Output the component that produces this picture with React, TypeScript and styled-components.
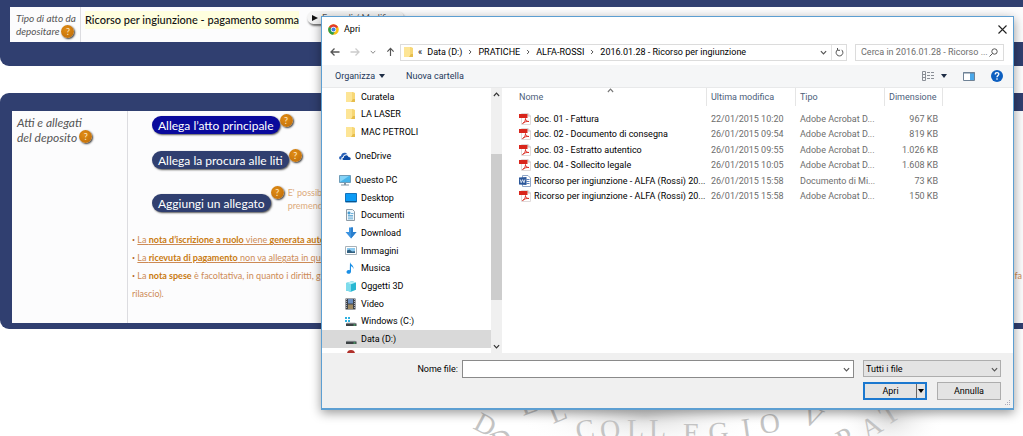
import React from "react";
import styled, { createGlobalStyle, css } from "styled-components";

const navy = "#303f70";
const ui = 'Roboto, "Open Sans", sans-serif';

const Global = createGlobalStyle`
  * { box-sizing: border-box; }
  html, body { margin: 0; background: #fff; overflow: hidden; }
  body { font-family: Lato, "Noto Sans", sans-serif; }
  button, input, select { font: inherit; color: inherit; margin: 0; }
  svg { display: block; flex: none; }
`;

/* ---------- deposit page ---------- */

const Page = styled.div`
  position: relative;
  min-height: 100vh;
  overflow: hidden;
`;

const Panel = styled.section<{ $first?: boolean }>`
  background: ${navy};
  border-radius: ${(p) => (p.$first ? "0 0 0 9px" : "9px 0 0 9px")};
  padding: ${(p) => (p.$first ? "7px 0 24px 10px" : "18px 0 6px 12px")};
  margin-bottom: 27px;
`;

const PanelBody = styled.div<{ $label: number; $height: number }>`
  display: grid;
  grid-template-columns: ${(p) => p.$label}px 1fr;
  min-height: ${(p) => p.$height}px;
  background: #fcfcfd;
`;

const Label = styled.div<{ $large?: boolean }>`
  font-style: italic;
  color: #555;
  border-right: 1px solid #dcdce0;
  white-space: nowrap;
  ${(p) =>
    p.$large
      ? css`
          font-size: 12px;
          line-height: 15px;
          padding: 4px 0 0 5px;
        `
      : css`
          font-size: 10px;
          line-height: 13px;
          padding: 5px 0 0 6px;
        `}
`;

const LabelRow = styled.div`
  display: flex;
  gap: 2px;
`;

const Help = styled.button`
  width: 13px;
  height: 13px;
  flex: none;
  border: 0;
  border-radius: 50%;
  padding: 0;
  background: radial-gradient(circle at 40% 35%, #e28d14, #b9690a);
  box-shadow: 1px 1px 2px #333;
  color: #ffe9c4;
  font-size: 9px;
  line-height: 13px;
  font-style: normal;
  text-align: center;
`;

const ActType = styled.div`
  display: flex;
  align-items: flex-start;
  gap: 8px;
  padding: 4px 0 0 4px;
`;

const ActName = styled.span`
  background: #ffffdf;
  font-size: 11px;
  line-height: 18px;
  font-weight: 500;
  color: #111;
  white-space: nowrap;
`;

const Pill = styled.button`
  display: flex;
  align-items: center;
  gap: 4px;
  height: 13px;
  border: 0;
  border-radius: 7px;
  background: #f4f4f4;
  box-shadow: 1px 2px 2px #777;
  padding: 0 8px 0 5px;
  font-size: 9px;
  color: #555;
`;

const Content = styled.div`
  padding: 5px 0 0 4px;
`;

const Actions = styled.div`
  display: grid;
  row-gap: 17px;
  padding-left: 20px;
`;

const Action = styled.div<{ $low?: boolean }>`
  display: flex;
  align-items: flex-start;
  ${(p) => p.$low && "padding-top: 8px;"}
`;

const ActionButton = styled.button<{ $active?: boolean }>`
  height: 18px;
  border: 0;
  border-radius: 9px;
  padding: 0 6px;
  font-size: 12px;
  line-height: 17px;
  white-space: nowrap;
  color: #fff;
  background: ${(p) => (p.$active ? "#0a0a9c" : navy)};
  box-shadow: 1px 1px 2px #555;
`;

const Tip = styled.div<{ $raised?: boolean }>`
  display: flex;
  margin-top: ${(p) => (p.$raised ? "-8px" : "-2px")};
`;

const Note = styled.p`
  margin: 0 0 0 4px;
  color: #dcab7c;
  font-size: 9px;
  line-height: 13px;
`;

const Notes = styled.ul`
  list-style: none;
  margin: 19px 0 0;
  padding: 0;
  font-size: 9px;
  line-height: 18px;
  color: #cd8a55;
  white-space: nowrap;
  b { color: #c97a10; }
`;

const Bullet = styled.span`
  font: 9px ${ui};
  color: #b5651d;
`;

const Spread = styled.span`
  display: flex;
  justify-content: space-between;
  padding-right: 1px;
`;

const Watermark = styled.svg`
  position: absolute;
  left: 455px;
  top: 396px;
`;

/* ---------- file dialog ---------- */

const Dialog = styled.div`
  position: absolute;
  left: 321px;
  right: 9px;
  top: 16px;
  background: #fff;
  border: 1px solid #5d9fd2;
  border-bottom-width: 2px;
  box-shadow: 0 3px 10px rgba(0, 0, 0, 0.4);
  font-family: ${ui};
  font-size: 9px;
  line-height: 14px;
  color: #000;
`;

const TitleBar = styled.header`
  display: flex;
  align-items: center;
  gap: 5px;
  height: 24px;
  padding: 0 5px 0 6px;
`;

const Title = styled.h1`
  flex: 1;
  margin: 0;
  font: inherit;
`;

const IconButton = styled.button<{ $gap?: number }>`
  display: flex;
  align-items: center;
  justify-content: center;
  gap: ${(p) => p.$gap ?? 0}px;
  border: 0;
  padding: 0;
  background: none;
`;

const NavBar = styled.nav`
  display: flex;
  align-items: center;
  height: 22px;
  margin-bottom: 2px;
  padding: 0 9px 0 8px;
`;

const Arrows = styled.div`
  display: flex;
  align-items: center;
  gap: 10px;
  width: 70px;
`;

const Address = styled.div`
  flex: 1;
  display: flex;
  align-items: center;
  height: 17px;
  border: 1px solid #dcdcdc;
  padding-left: 2px;
  white-space: nowrap;
`;

const Crumbs = styled.div`
  flex: 1;
  display: flex;
  align-items: center;
  gap: 5px;
  padding-left: 4px;
  a { color: inherit; text-decoration: none; }
`;

const Reload = styled(IconButton)`
  width: 15px;
  height: 15px;
  margin-left: 4px;
  border-left: 1px solid #e3e3e3;
`;

const Search = styled.label`
  display: flex;
  align-items: center;
  width: 149px;
  height: 17px;
  margin-left: 8px;
  padding: 0 5px;
  border: 1px solid #dcdcdc;
  input {
    flex: 1;
    min-width: 0;
    border: 0;
    padding: 0;
    outline: 0;
    background: none;
  }
  input::placeholder { color: #6d6d6d; opacity: 1; }
`;

const Toolbar = styled.div`
  display: flex;
  align-items: center;
  height: 23px;
  padding: 0 10px 0 13px;
  background: #f5f6f7;
  border-bottom: 1px solid #e8e9ea;
  color: #1e395b;
`;

const ToolGroup = styled.div<{ $gap: number; $grow?: boolean }>`
  display: flex;
  align-items: center;
  gap: ${(p) => p.$gap}px;
  ${(p) => p.$grow && "flex: 1;"}
`;

const Main = styled.div`
  display: flex;
  height: 265px;
`;

const Sidebar = styled.aside`
  width: 169px;
  overflow: hidden;
`;

const Tree = styled.ul<{ $height: number; $gap?: number }>`
  display: grid;
  grid-auto-rows: 1fr;
  height: ${(p) => p.$height}px;
  margin: 0 0 ${(p) => p.$gap || 0}px;
  padding: 0;
  list-style: none;
`;

const TreeItem = styled.li<{ $top?: boolean; $selected?: boolean }>`
  display: grid;
  grid-template-columns: 12px 1fr;
  align-items: center;
  gap: 4px;
  padding-left: ${(p) => (p.$top ? 17 : 23)}px;
  background: ${(p) => (p.$selected ? "#d9d9d9" : "transparent")};
`;

const ScrollBar = styled.div`
  display: flex;
  flex-direction: column;
  align-items: center;
  width: 11px;
  background: #f0f0f0;
`;

const ScrollArrow = styled(IconButton)`
  width: 11px;
  height: 13px;
`;

const Thumb = styled.div`
  width: 11px;
  height: 146px;
  margin: 53px 0 auto;
  background: #cdcdcd;
`;

const Files = styled.div`
  flex: 1;
  min-width: 0;
  padding-left: 13px;
  overflow: hidden;
`;

const FileTable = styled.table`
  width: 428px;
  table-layout: fixed;
  border-collapse: separate;
  border-spacing: 0;
  th {
    height: 18px;
    padding: 0 0 0 4px;
    border-right: 1px solid #e5e5e5;
    font-weight: 400;
    text-align: left;
    color: #4c607a;
  }
  td {
    height: 15px;
    padding: 0 0 0 4px;
    color: #6d6d6d;
    white-space: nowrap;
  }
  tr:nth-child(even) td { height: 16px; }
  td:last-child { text-align: right; padding-right: 5px; }
`;

const Head = styled.thead`
  &::after {
    content: "";
    display: block;
    height: 5px;
  }
`;

const FileName = styled.span`
  display: flex;
  align-items: center;
  gap: 3px;
  color: #000;
`;

const SortMark = styled.span`
  position: absolute;
  left: 285px;
  top: 70px;
`;

const Footer = styled.footer`
  position: relative;
  display: grid;
  grid-template-columns: 1fr 138px;
  gap: 4px 9px;
  height: 55px;
  padding: 7px 12px 8px 90px;
  background: #f0f0f0;
`;

const NameField = styled.div`
  display: grid;
  grid-template-columns: 46px 1fr;
  align-items: center;
  gap: 4px;
  label { text-align: right; }
`;

const Combo = styled.span`
  display: flex;
  align-items: center;
  height: 18px;
  padding-right: 3px;
  border: 1px solid #8a8a8a;
  background: #fff;
  input {
    flex: 1;
    min-width: 0;
    height: 14px;
    border: 0;
    padding: 0 3px;
    outline: 0;
    background: none;
  }
`;

const TypeField = styled.span`
  position: relative;
  height: 17px;
  select {
    display: block;
    appearance: none;
    width: 100%;
    height: 17px;
    padding: 0 2px;
    border: 1px solid #adadad;
    border-radius: 0;
    background: #e3e3e3;
    line-height: 14px;
  }
  svg {
    position: absolute;
    right: 3px;
    top: 6px;
    pointer-events: none;
  }
`;

const Buttons = styled.div`
  grid-column: 2;
  display: flex;
  justify-content: space-between;
`;

const Split = styled.div`
  display: flex;
  width: 64px;
  height: 18px;
  border: 2px solid #1b78cf;
  background: #e3e3e3;
`;

const OpenButton = styled(IconButton)`
  flex: 1;
`;

const OpenMenu = styled(IconButton)`
  width: 9px;
  border-left: 1px solid #666;
`;

const Cancel = styled.button`
  width: 64px;
  height: 18px;
  padding: 0;
  border: 1px solid #adadad;
  background: #e3e3e3;
  line-height: 14px;
`;

const Grip = styled.svg`
  position: absolute;
  right: 2px;
  bottom: 1px;
`;

/* ---------- icons ---------- */

const Chevron = ({ d = "down", size = 7, color = "#555" }: { d?: "down" | "up" | "right"; size?: number; color?: string }) => (
  <svg width={size} height={size} viewBox="0 0 8 8" fill="none" stroke={color} strokeWidth="1.3">
    <path d={d === "down" ? "M1 2.5 4 5.7 7 2.5" : d === "up" ? "M1 5.7 4 2.5 7 5.7" : "M2.7 1.3 5.4 4 2.7 6.7"} />
  </svg>
);

const Triangle = ({ w = 6, color = "#1e2d45" }: { w?: number; color?: string }) => (
  <svg width={w} height="4" viewBox="0 0 6 4"><path d="M0 0h6L3 4z" fill={color} /></svg>
);

const Arrow = ({ up, color = "#555" }: { up?: boolean; color?: string }) => (
  <svg width={up ? 9 : 10} height="10" viewBox="0 0 10 10" fill="none" stroke={color} strokeWidth="1.3">
    {up ? <path d="M5 9.5V1M1.5 4.5 5 1l3.5 3.5" /> : <path d="M9.5 5H1M4.5 1.5 1 5l3.5 3.5" />}
  </svg>
);

const Folder = () => (
  <svg width="11" height="12" viewBox="0 0 11 12">
    <path d="M1 1h7l2 1v9H1z" fill="#f7d775" />
    <path d="M1 1h6v10H1z" fill="#fde596" />
    <path d="M8 8h2v3H6z" fill="#e6bd4c" />
  </svg>
);

const Chrome = () => (
  <svg width="11" height="11" viewBox="0 0 24 24">
    <circle cx="12" cy="12" r="11.5" fill="#fbc116" />
    <path d="M12 12 2 6.3A11.5 11.5 0 0 1 22 6.3z" fill="#e33b2e" />
    <path d="M12 12 2 6.3A11.5 11.5 0 0 0 11 23.5l5-9z" fill="#2a9d4a" />
    <circle cx="12" cy="12" r="5.8" fill="#fff" />
    <circle cx="12" cy="12" r="4.5" fill="#3f7fe0" />
  </svg>
);

const Pdf = () => (
  <svg width="12" height="12" viewBox="0 0 12 12">
    <path d="M2.5.5H9L11.5 3v8.500h-9z" fill="#fff" stroke="#e0dada" />
    <path d="M9 .5V3h2.500" fill="none" stroke="#b9b3b3" strokeWidth=".8" />
    <path d="M0 1h8.500v4H0z" fill="#d9261c" />
    <path d="M3.500 10.500c2-1 3-3 3-5 0 2 1.500 3 3.500 3-2.500-.3-4.500.4-6.500 2z" fill="none" stroke="#d9261c" strokeWidth=".9" />
  </svg>
);

const Word = () => (
  <svg width="12" height="12" viewBox="0 0 12 12">
    <path d="M3.500.5H9L11.500 3v8.500h-8z" fill="#fff" stroke="#8fa6c8" />
    <path d="M7.500 4.500h3M7.500 6.500h3M7.500 8.500h3" stroke="#5f84bd" />
    <path d="M0 2.500 7.500 2v8L0 9.500z" fill="#2b579a" />
    <path d="m1.300 4.500.9 3.200 1.400-3 1.400 3 .9-3.200" fill="none" stroke="#fff" strokeWidth=".8" />
  </svg>
);

const OneDrive = () => (
  <svg width="12" height="10" viewBox="0 0 12 10">
    <path d="M1 8.500C-.7 7.500.2 5 2 5c.2-3.500 5-4.500 6.500-1.500C6 3 4.500 4 4 6c-1.500 0-2 1.500-1.500 2.500z" fill="#2a62b8" />
    <path d="M4.500 9C3 8.800 3 6.800 4.800 6.700 5 4 8.700 3.500 9.500 6 12 6 12.500 9 10.500 9z" fill="#0c47a1" />
  </svg>
);

const Pc = () => (
  <svg width="12" height="11" viewBox="0 0 12 11">
    <path d="M.5.5h11v7H.5z" fill="#47b4ea" stroke="#6f9cb8" />
    <path d="M1 7V1h9z" fill="#85d3f7" />
    <path d="M5 8h2v1.500h3v1H2v-1h3z" fill="#8195a3" />
  </svg>
);

const Desktop = () => (
  <svg width="12" height="10" viewBox="0 0 12 10">
    <path d="M.5.5h11v8.500H.5z" fill="#0c9bf5" stroke="#1473bb" />
    <path d="M1 8.500h10" stroke="#0a568f" />
  </svg>
);

const Documents = () => (
  <svg width="11" height="12" viewBox="0 0 11 12">
    <path d="M1.500.5h6l2 2v9h-8z" fill="#eef6fb" stroke="#8d9ba6" />
    <path d="M3 3h2v2H3zM3 8h5M3 6.500h5M6 4.500h2.500M3 9.800h5" fill="#3b97d3" stroke="#4f9fd0" strokeWidth=".8" />
  </svg>
);

const Download = () => (
  <svg width="12" height="12" viewBox="0 0 12 12">
    <path d="M4 .5h4V5h3.500L6 11.500.5 5H4z" fill="#3c93e0" />
    <path d="M6 .5h2V5h3.500L6 11.500z" fill="#2b7fcd" />
  </svg>
);

const Pictures = () => (
  <svg width="12" height="9" viewBox="0 0 12 9">
    <path d="M.5.5h11v8H.5z" fill="#fff" stroke="#a8b2b9" />
    <path d="M2 2h8v5H2z" fill="#8ccaf0" />
    <path d="M2 7V4.500l2.500-1L7 5.500l3-.3V7z" fill="#315f7f" />
  </svg>
);

const Music = () => (
  <svg width="11" height="12" viewBox="0 0 11 12">
    <path d="M5 0c.2 2.500 4 3 3.500 7-.4-1.500-1.500-2.500-2.500-2.700V9.500C6 12.500 1.500 12.500 1.500 10c0-1.600 1.800-2.500 3.300-1.700z" fill="#1a8fe6" />
  </svg>
);

const Objects = () => (
  <svg width="12" height="11" viewBox="0 0 12 11">
    <path d="M1 2 7 .3 11 1.500v7.300L6 10.800 1 9.500z" fill="#28b7d2" />
    <path d="m1 2 5 1.200v7.600L1 9.500z" fill="#7edcec" />
    <path d="m1 2 6-1.700 4 1.200-5 1.700z" fill="#b5f0f7" />
  </svg>
);

const Video = () => (
  <svg width="11" height="12" viewBox="0 0 11 12">
    <path d="M.5.5h10v11H.5z" fill="#3e4348" />
    <path d="M3 1h5v4.500H3z" fill="#6c8fc0" />
    <path d="M3 6.500h5V11H3z" fill="#a08b62" />
    <path d="M1.500 1v10M9.500 1v10" stroke="#ccd" strokeDasharray="1 1" strokeWidth=".8" />
  </svg>
);

const Drive = ({ win }: { win?: boolean }) => (
  <svg width="12" height="11" viewBox="0 0 12 11">
    {win && <path d="M0 1h2v2H0zM3 1h2v2H3zM0 4h2v2H0zM3 4h2v2H3z" fill="#2fb1e0" />}
    <path d="M2 6.500h8l1.500 1.500H1z" fill="#b9bfc2" />
    <path d="M1 7.500h10.500V10H1z" fill="#3c4144" />
    <path d="M8.500 8.500h2v1h-2z" fill="#53d17a" />
  </svg>
);

const RedDrive = () => (
  <svg width="12" height="16" viewBox="0 0 12 16"><circle cx="6" cy="5" r="4" fill="#b0302a" /></svg>
);

/* ---------- data ---------- */

const folders = ["Curatela", "LA LASER", "MAC PETROLI"];

const places: [string, React.ReactNode][] = [
  ["Desktop", <Desktop />],
  ["Documenti", <Documents />],
  ["Download", <Download />],
  ["Immagini", <Pictures />],
  ["Musica", <Music />],
  ["Oggetti 3D", <Objects />],
  ["Video", <Video />],
  ["Windows (C:)", <Drive win />],
  ["Data (D:)", <Drive />],
];

const files = [
  ["doc. 01 - Fattura", "22/01/2015 10:20", "Adobe Acrobat D...", "967 KB"],
  ["doc. 02 - Documento di consegna", "26/01/2015 09:54", "Adobe Acrobat D...", "819 KB"],
  ["doc. 03 - Estratto autentico", "26/01/2015 09:55", "Adobe Acrobat D...", "1.026 KB"],
  ["doc. 04 - Sollecito legale", "26/01/2015 10:05", "Adobe Acrobat D...", "1.608 KB"],
  ["Ricorso per ingiunzione - ALFA (Rossi) 20...", "26/01/2015 15:58", "Documento di Mi...", "73 KB"],
  ["Ricorso per ingiunzione - ALFA (Rossi) 20...", "26/01/2015 15:58", "Adobe Acrobat D...", "150 KB"],
];

const crumbs = ["Data (D:)", "PRATICHE", "ALFA-ROSSI", "2016.01.28 - Ricorso per ingiunzione"];

/* engraved letters of the seal: glyph, x, y, angle */
const engraving: [string, number, number, number][] = [
  ["D", 17, 32, 28],
  ["E", 68, 20, -20],
  ["L", 98, 28, -22],
  ["D", 40, 56, -20],
  ["E", 62, 58, 14],
  ["C", 122, 44, -8],
  ["O", 146, 44, -6],
  ["L", 172, 42, 0],
  ["L", 194, 42, 0],
  ["E", 228, 46, 0],
  ["G", 254, 46, -4],
  ["I", 288, 42, -8],
  ["O", 306, 38, -8],
  ["V", 345, 26, 20],
  ["P", 388, 54, -30],
  ["A", 412, 44, -30],
  ["T", 432, 30, -32],
];

const FileDialog = () => (
  <Dialog role="dialog" aria-label="Apri">
    <TitleBar>
      <Chrome />
      <Title>Apri</Title>
      <IconButton aria-label="Chiudi">
        <svg width="11" height="11" viewBox="0 0 11 11" stroke="#222" strokeWidth="1.1"><path d="m1.500 1.500 8 8m0-8-8 8" /></svg>
      </IconButton>
    </TitleBar>
    <NavBar>
      <Arrows>
        <IconButton aria-label="Indietro"><Arrow /></IconButton>
        <IconButton aria-label="Avanti">
          <svg width="10" height="10" viewBox="0 0 10 10" fill="none" stroke="#ccc" strokeWidth="1.3"><path d="M.5 5H9M5.500 1.500 9 5 5.500 8.500" /></svg>
        </IconButton>
        <IconButton aria-label="Recenti"><Chevron size={6} color="#888" /></IconButton>
        <IconButton aria-label="Su"><Arrow up /></IconButton>
      </Arrows>
      <Address>
        <Folder />
        <Crumbs>
          <span>«</span>
          {crumbs.map((c, i) => (
            <React.Fragment key={c}>
              {i > 0 && <Chevron d="right" size={6} />}
              <a href="#">{c}</a>
            </React.Fragment>
          ))}
        </Crumbs>
        <Chevron />
        <Reload aria-label="Aggiorna">
          <svg width="9" height="9" viewBox="0 0 9 9" fill="none" stroke="#555"><path d="M6.500 1.800A3.400 3.400 0 1 1 2.500 1.800M2.500 0v2.300H5" /></svg>
        </Reload>
      </Address>
      <Search>
        <input aria-label="Cerca" placeholder="Cerca in 2016.01.28 - Ricorso ..." />
        <svg width="9" height="9" viewBox="0 0 9 9" fill="none" stroke="#555"><circle cx="5.500" cy="3.500" r="2.700" /><path d="M3.500 5.500.5 8.500" /></svg>
      </Search>
    </NavBar>
    <Toolbar>
      <ToolGroup $gap={21} $grow>
        <IconButton $gap={4}>Organizza <Triangle /></IconButton>
        <IconButton>Nuova cartella</IconButton>
      </ToolGroup>
      <ToolGroup $gap={16}>
        <IconButton $gap={7} aria-label="Visualizzazione">
          <svg width="12" height="10" viewBox="0 0 12 10" fill="none" stroke="#8a8f96"><path d="M.5.5h3v9h-3zM.5 3.500h3M.5 6.500h3M5 1.500h3M9 1.500h3M5 4.500h3M9 4.500h3M5 7.500h3M9 7.500h3" /></svg>
          <Triangle />
        </IconButton>
        <IconButton aria-label="Riquadro di anteprima">
          <svg width="12" height="9" viewBox="0 0 12 9"><path d="M.5.5h11v8H.5z" fill="#fff" stroke="#6f8296" /><path d="M7 1h4v7H7z" fill="#4aa8ea" /><path d="M0 1h12" stroke="#6f8296" /></svg>
        </IconButton>
        <IconButton aria-label="Guida">
          <svg width="12" height="12" viewBox="0 0 12 12"><circle cx="6" cy="6" r="6" fill="#0d5fc0" /><path d="M4.200 4.500C4.200 2 8 2.200 7.800 4.300 7.700 5.500 6 5.600 6 7.300M6 8.300v1.400" fill="none" stroke="#fff" strokeWidth="1.3" /></svg>
        </IconButton>
      </ToolGroup>
    </Toolbar>
    <Main>
      <Sidebar>
        <Tree $height={53} $gap={6}>
          {folders.map((f) => (
            <TreeItem key={f}><Folder />{f}</TreeItem>
          ))}
        </Tree>
        <Tree $height={18} $gap={6}><TreeItem $top><OneDrive />OneDrive</TreeItem></Tree>
        <Tree $height={18}><TreeItem $top><Pc />Questo PC</TreeItem></Tree>
        <Tree $height={159}>
          {places.map(([name, icon]) => (
            <TreeItem key={name} $selected={name === "Data (D:)"}>{icon}{name}</TreeItem>
          ))}
        </Tree>
        <Tree $height={18}><TreeItem><RedDrive /></TreeItem></Tree>
      </Sidebar>
      <ScrollBar>
        <ScrollArrow aria-label="Scorri su"><Chevron d="up" color="#333" /></ScrollArrow>
        <Thumb />
        <ScrollArrow aria-label="Scorri giù"><Chevron color="#333" /></ScrollArrow>
      </ScrollBar>
      <Files>
        <FileTable>
          <colgroup>
            <col width="192" /><col width="89" /><col width="89" /><col width="58" />
          </colgroup>
          <Head>
            <tr><th>Nome</th><th>Ultima modifica</th><th>Tipo</th><th>Dimensione</th></tr>
          </Head>
          <tbody>
            {files.map(([name, date, type, size], i) => (
              <tr key={i}>
                <td><FileName>{type.startsWith("Doc") ? <Word /> : <Pdf />}{name}</FileName></td>
                <td>{date}</td><td>{type}</td><td>{size}</td>
              </tr>
            ))}
          </tbody>
        </FileTable>
      </Files>
    </Main>
    <SortMark><Chevron d="up" color="#777" /></SortMark>
    <Footer>
      <NameField>
        <label htmlFor="filename">Nome file:</label>
        <Combo><input id="filename" /><Chevron /></Combo>
      </NameField>
      <TypeField>
        <select aria-label="Tipo di file"><option>Tutti i file</option></select>
        <Chevron />
      </TypeField>
      <Buttons>
        <Split>
          <OpenButton>Apri</OpenButton>
          <OpenMenu aria-label="Altre opzioni"><Triangle color="#000" /></OpenMenu>
        </Split>
        <Cancel>Annulla</Cancel>
      </Buttons>
      <Grip width="7" height="7" viewBox="0 0 7 7"><path d="M5 0h1v1H5zM3 2h1v1H3zM5 2h1v1H5zM1 4h1v1H1zM3 4h1v1H3zM5 4h1v1H5z" fill="#aab" /></Grip>
    </Footer>
  </Dialog>
);

const App = () => (
  <Page>
    <Global />
    <Panel $first>
      <PanelBody $label={71} $height={35}>
        <Label>
          Tipo di atto da
          <LabelRow>depositare <Help>?</Help></LabelRow>
        </Label>
        <ActType>
          <ActName>Ricorso per ingiunzione - pagamento somma</ActName>
          <Pill><svg width="6" height="6" viewBox="0 0 6 6"><path d="M0 0v6l6-3z" fill="#111" /></svg>Espandi / Modifica</Pill>
        </ActType>
      </PanelBody>
    </Panel>
    <Panel>
      <PanelBody $label={116} $height={212}>
        <Label $large>
          Atti e allegati
          <LabelRow>del deposito <Help>?</Help></LabelRow>
        </Label>
        <Content>
          <Actions>
            <Action><ActionButton $active>Allega l’atto principale</ActionButton><Tip><Help>?</Help></Tip></Action>
            <Action><ActionButton>Allega la procura alle liti</ActionButton><Tip><Help>?</Help></Tip></Action>
            <Action $low>
              <ActionButton>Aggiungi un allegato</ActionButton>
              <Tip $raised><Help>?</Help><Note>E' possibile<br />premendo</Note></Tip>
            </Action>
          </Actions>
          <Notes>
            <li><Bullet>•</Bullet> <u>La <b>nota d’iscrizione a ruolo</b> viene <b>generata automaticamente</b></u></li>
            <li><Bullet>•</Bullet> <u>La <b>ricevuta di pagamento</b> non va allegata in questa</u></li>
            <li>
              <Spread><span><Bullet>•</Bullet> La <b>nota spese</b> è facoltativa, in quanto i diritti, gli onorari</span><span>fa</span></Spread>
              rilascio).
            </li>
          </Notes>
        </Content>
      </PanelBody>
    </Panel>
    <Watermark width="500" height="60" viewBox="0 0 500 60" fontFamily="Liberation Serif, serif" fontSize="28" fill="#c4c4c4">
      <defs>
        <radialGradient id="stone">
          <stop offset="0" stopColor="#dcdcdc" />
          <stop offset="1" stopColor="#fff" stopOpacity="0" />
        </radialGradient>
      </defs>
      <ellipse cx="190" cy="20" rx="130" ry="38" fill="url(#stone)" />
      <ellipse cx="435" cy="22" rx="55" ry="38" fill="url(#stone)" />
      {engraving.map(([glyph, x, y, angle]) => (
        <text key={x} transform={`translate(${x} ${y}) rotate(${angle})`}>{glyph}</text>
      ))}
    </Watermark>
    <FileDialog />
  </Page>
);

export default App;
